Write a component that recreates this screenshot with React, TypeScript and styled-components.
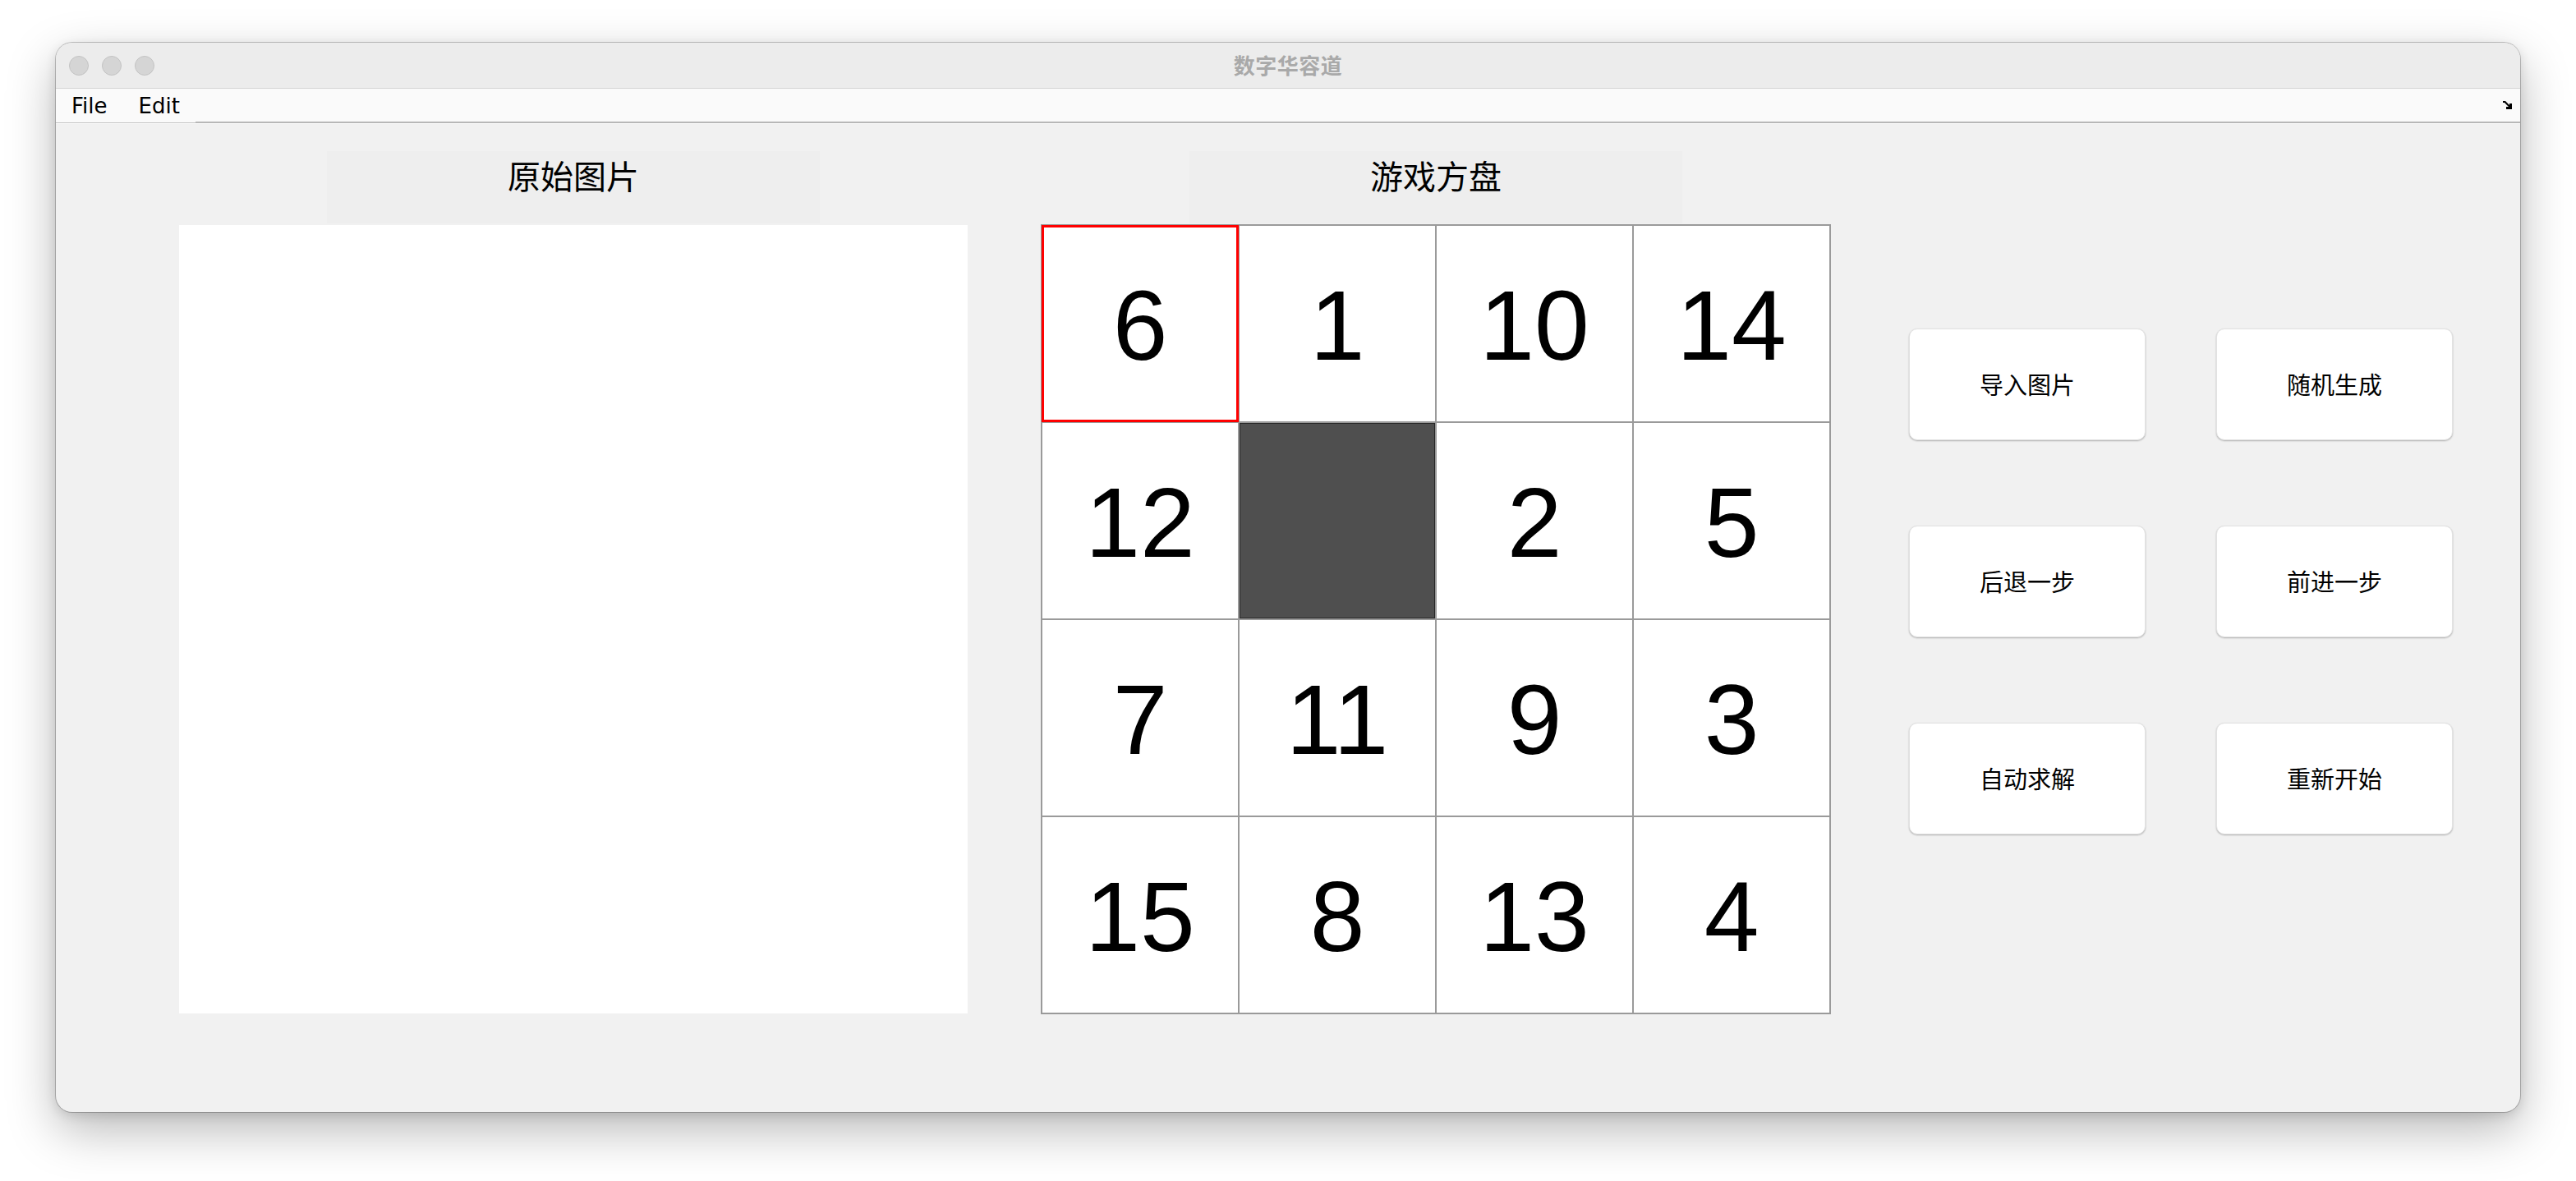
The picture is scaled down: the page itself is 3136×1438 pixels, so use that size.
import React from "react";
import styled, { createGlobalStyle } from "styled-components";

const GlobalStyle = createGlobalStyle`
  html, body { margin: 0; padding: 0; background: #ffffff; }
  body { font-family: "Noto Sans CJK SC", "Liberation Sans", sans-serif; }
  * { box-sizing: border-box; }
`;

const Page = styled.div`
  width: 3136px;
  height: 1438px;
  padding: 52px 0 0 68px;
  overflow: hidden;
`;

const Window = styled.div`
  width: 3000px;
  height: 1302px;
  border-radius: 20px;
  overflow: hidden;
  display: flex;
  flex-direction: column;
  background: #f1f1f1;
  box-shadow: 0 0 0 1px rgba(0, 0, 0, 0.22), 0 22px 60px rgba(0, 0, 0, 0.28),
    0 4px 14px rgba(0, 0, 0, 0.12);
`;

const TitleBar = styled.div`
  height: 56px;
  flex: none;
  display: grid;
  grid-template-columns: 1fr auto 1fr;
  align-items: center;
  background: #ececec;
  border-bottom: 1px solid #d4d4d4;
  padding: 0 16px;
`;

const Lights = styled.div`
  display: flex;
  gap: 16px;
  align-items: center;
`;

const Light = styled.span`
  width: 24px;
  height: 24px;
  border-radius: 50%;
  background: #d5d5d5;
  border: 1px solid #c3c3c3;
`;

const Title = styled.div`
  font-family: "Noto Sans CJK SC", sans-serif;
  font-weight: 700;
  font-size: 26px;
  line-height: 1;
  color: #a9a9a9;
  letter-spacing: 0.5px;
  margin-bottom: 2px;
`;

const MenuBar = styled.div`
  height: 42px;
  flex: none;
  display: flex;
  align-items: stretch;
  background: #fafafa;
`;

const Menus = styled.div`
  display: flex;
  align-items: stretch;
  border-bottom: 1px solid #c4c4c4;
`;

const MenuItem = styled.div`
  display: flex;
  align-items: center;
  padding: 1px 19px 0 19px;
  font-family: "DejaVu Sans", sans-serif;
  font-size: 26px;
  color: #000;
`;

const MenuFill = styled.div`
  flex: 1;
  display: flex;
  justify-content: flex-end;
  align-items: center;
  padding-right: 8px;
  border-bottom: 2px solid #b7b7b7;
`;

const Content = styled.div`
  flex: 1;
  display: flex;
  align-items: flex-start;
  padding: 33px 0 0 150px;
  border-top: 1px solid #fbfbfb;
`;

const Column = styled.div<{ $gap: number; $offset?: number }>`
  display: flex;
  flex-direction: column;
  align-items: center;
  gap: ${(p) => p.$gap}px;
  margin-left: ${(p) => p.$offset ?? 0}px;
`;

const LabelBox = styled.div`
  width: 600px;
  height: 88px;
  background: #eeeeee;
  display: flex;
  justify-content: center;
  padding-top: 9px;
  font-family: "Noto Sans CJK SC", sans-serif;
  font-size: 40px;
  line-height: 40px;
  color: #000;
`;

const ImagePanel = styled.div`
  width: 960px;
  height: 960px;
  background: #ffffff;
`;

const Board = styled.div`
  display: grid;
  grid-template-columns: repeat(4, 240px);
  grid-template-rows: repeat(4, 240px);
  border: 1px solid #9a9a9a;
  background: #ffffff;
`;

const Tile = styled.div<{ $selected?: boolean; $empty?: boolean }>`
  display: flex;
  align-items: center;
  justify-content: center;
  padding-top: 4px;
  font-family: "Liberation Sans", Arial, sans-serif;
  font-size: 120px;
  color: #000;
  background: ${(p) => (p.$empty ? "#4f4f4f" : "#ffffff")};
  border: ${(p) => (p.$selected ? "3px solid #ff0000" : "1px solid #9a9a9a")};
  box-shadow: ${(p) => (p.$empty ? "inset 0 0 0 1px #262626" : "none")};
`;

const Buttons = styled.div`
  margin-left: 95px;
  margin-top: 216px;
  display: grid;
  grid-template-columns: repeat(2, 288px);
  grid-auto-rows: 136px;
  column-gap: 86px;
  row-gap: 104px;
`;

const ActionButton = styled.button`
  background: #ffffff;
  border: 1px solid #e2e2e2;
  border-radius: 10px;
  box-shadow: 0 1px 2px rgba(0, 0, 0, 0.28);
  font-family: "Noto Sans CJK SC", sans-serif;
  font-size: 29px;
  color: #000;
  padding: 0 0 3px 0;
  display: flex;
  align-items: center;
  justify-content: center;
`;

const ResizeIcon = () => (
  <svg width="14" height="12" viewBox="0 0 14 12">
    <path d="M1 1 H4 L9 6 V4 H12 V11 H5 V8 H8 L3 3 H1 Z" fill="#000" />
  </svg>
);

const tiles: (number | null)[] = [6, 1, 10, 14, 12, null, 2, 5, 7, 11, 9, 3, 15, 8, 13, 4];
const actions = ["导入图片", "随机生成", "后退一步", "前进一步", "自动求解", "重新开始"];

export default function App() {
  return (
    <>
      <GlobalStyle />
      <Page>
        <Window>
          <TitleBar>
            <Lights>
              <Light />
              <Light />
              <Light />
            </Lights>
            <Title>数字华容道</Title>
            <div />
          </TitleBar>
          <MenuBar>
            <Menus>
              <MenuItem>File</MenuItem>
              <MenuItem>Edit</MenuItem>
            </Menus>
            <MenuFill>
              <ResizeIcon />
            </MenuFill>
          </MenuBar>
          <Content>
            <Column $gap={2}>
              <LabelBox>原始图片</LabelBox>
              <ImagePanel />
            </Column>
            <Column $gap={1} $offset={89}>
              <LabelBox>游戏方盘</LabelBox>
              <Board>
                {tiles.map((t, i) => (
                  <Tile key={i} $selected={i === 0} $empty={t === null}>
                    {t ?? ""}
                  </Tile>
                ))}
              </Board>
            </Column>
            <Buttons>
              {actions.map((a) => (
                <ActionButton key={a}>{a}</ActionButton>
              ))}
            </Buttons>
          </Content>
        </Window>
      </Page>
    </>
  );
}
